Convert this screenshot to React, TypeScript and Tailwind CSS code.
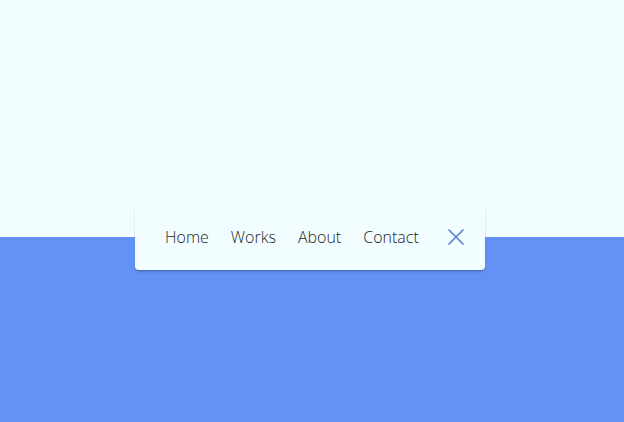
import React from 'react';

const links = ['Home', 'Works', 'About', 'Contact'];

export default function App() {
  return (
    <div className="relative flex h-[422px] w-[624px] flex-col overflow-hidden">
      <div className="h-[237px] bg-[#f2fdff]" />
      <div className="flex-1 bg-[#6391f5]" />

      {/* floating nav card */}
      <nav className="absolute left-[135px] top-[204px] flex h-[66px] w-[350px] items-center rounded-b-[4px] bg-[#f2fdff] pl-[30px] shadow-[0_2px_3px_-1px_rgba(0,0,0,0.35)]">
        <ul className="flex items-center gap-[22px] font-['Open_Sans',sans-serif] text-[16px] font-light text-[#1f1f1f]">
          {links.map((l) => (
            <li key={l}>{l}</li>
          ))}
        </ul>
        <button className="ml-auto mr-[20px] flex h-[18px] w-[18px] items-center justify-center text-[#5b80d6]">
          <svg width="18" height="18" viewBox="0 0 18 18" fill="none" stroke="currentColor" strokeWidth="1.7" strokeLinecap="round">
            <path d="M2 2 L16 16 M16 2 L2 16" />
          </svg>
        </button>
      </nav>
    </div>
  );
}
